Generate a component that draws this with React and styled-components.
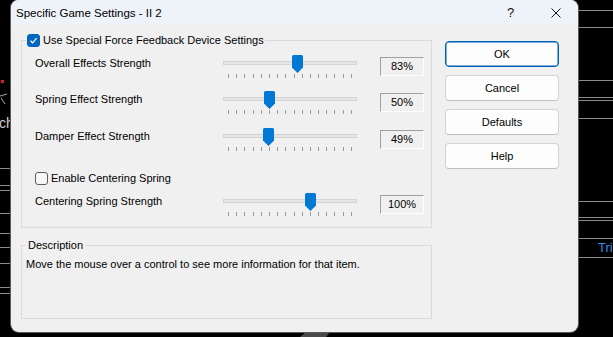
import React from "react";
import styled, { createGlobalStyle } from "styled-components";

const Global = createGlobalStyle`
	html, body {
		margin: 0;
		padding: 0;
		background: #000;
		overflow: hidden;
	}
`;

const FONT = `"Liberation Sans", Arial, sans-serif`;

const Desktop = styled.div`
	position: relative;
	width: 613px;
	height: 337px;
	background: #000;
	overflow: hidden;
	font-family: ${FONT};
`;

// the app behind the dialog
const Backdrop = styled.svg`
	position: absolute;
	left: 0;
	top: 0;
`;

const Window = styled.div`
	position: absolute;
	left: 11px;
	top: 0;
	width: 567px;
	height: 332px;
	border-radius: 8px;
	background: #f0f0f0;
	box-shadow: 0 0 0 1px #5a5a5a;
	display: flex;
	flex-direction: column;
	overflow: hidden;
`;

const TitleBar = styled.div`
	height: 25px;
	flex: none;
	background: #eef3f9;
	display: flex;
	align-items: center;
	padding-left: 5px;
`;

const Title = styled.span`
	flex: 1;
	font-size: 11.5px;
	color: #000;
`;

const CapBtn = styled.div`
	width: 45px;
	height: 25px;
	display: flex;
	align-items: center;
	justify-content: center;
	font-size: 13px;
	color: #111;
`;

const Body = styled.div`
	display: flex;
	gap: 13px;
	padding: 8px 0 0 10px;
`;

const Main = styled.div`
	width: 411px;
	display: flex;
	flex-direction: column;
`;

const Group = styled.fieldset`
	margin: ${p => p.$mt || 0}px 0 0 0;
	padding: 0;
	border: 1px solid #dadada;
	min-width: 0;
	box-sizing: border-box;
	height: ${p => (p.$h ? p.$h + "px" : "auto")};
`;

const GroupInner = styled.div`
	padding: ${p => p.$pad};
`;

const Legend = styled.legend`
	margin-left: 4px;
	padding: ${p => p.$pad || "0 1px"};
	display: flex;
	align-items: center;
	gap: 3px;
	height: 14px;
	font-size: 11px;
	line-height: 14px;
	color: #000;
`;

const Box = styled.span`
	width: 13px;
	height: 13px;
	box-sizing: border-box;
	border-radius: 3px;
	flex: none;
	display: flex;
	align-items: center;
	justify-content: center;
	background: ${p => (p.$on ? "#0067c0" : "#f7f7f7")};
	border: 1px solid ${p => (p.$on ? "#0067c0" : "#5d5d5d")};
`;

const Row = styled.div`
	display: grid;
	grid-template-columns: 165px 134px 44px;
	column-gap: 23px;
	align-items: start;
	margin-top: ${p => p.$mt}px;
`;

const Label = styled.div`
	font-size: 11px;
	line-height: 16px;
	color: #000;
	white-space: nowrap;
`;

const Slider = styled.div`
	position: relative;
	height: 24px;
`;

const Track = styled.div`
	margin-top: 6px;
	height: 4px;
	box-sizing: border-box;
	background: #e6e6e6;
	border: 1px solid #d4d4d4;
`;

const Ticks = styled.div`
	margin-top: 9px;
	padding: 0 5px;
	display: flex;
	justify-content: space-between;
`;

const Tick = styled.span`
	width: 1px;
	height: 4px;
	background: #9a9a9a;
`;

const Thumb = styled.svg`
	position: absolute;
	top: 0;
`;

const Value = styled.div`
	margin-top: 2px;
	height: 19px;
	box-sizing: border-box;
	border-top: 1px solid #a0a0a0;
	border-left: 1px solid #a0a0a0;
	border-right: 1px solid #fff;
	border-bottom: 1px solid #fff;
	font-size: 11px;
	line-height: 17px;
	text-align: center;
	color: #000;
`;

const CheckRow = styled.div`
	display: flex;
	align-items: center;
	gap: 3px;
	height: 14px;
	margin-top: ${p => p.$mt}px;
	font-size: 11px;
	color: #000;
`;

const DescText = styled.div`
	font-size: 11px;
	line-height: 14px;
	color: #000;
`;

const Side = styled.div`
	width: 114px;
	margin-top: 8px;
	display: flex;
	flex-direction: column;
	gap: 8px;
`;

const Button = styled.div`
	height: 26px;
	box-sizing: border-box;
	border-radius: 4px;
	background: #fdfdfd;
	border: 1px solid ${p => (p.$primary ? "#005fb8" : "#d3d3d3")};
	border-bottom-color: ${p => (p.$primary ? "#005fb8" : "#bfbfbf")};
	box-shadow: ${p => (p.$primary ? "inset 0 0 0 0.5px #005fb8" : "none")};
	display: flex;
	align-items: center;
	justify-content: center;
	font-size: 11px;
	color: #000;
`;

const sliders = [
	{ label: "Overall Effects Strength", value: "83%", pos: 74, mt: 0 },
	{ label: "Spring Effect Strength", value: "50%", pos: 46.5, mt: 12 },
	{ label: "Damper Effect Strength", value: "49%", pos: 45, mt: 13 }
];

function Check({ on }) {
	return (
		<Box $on={on}>
			{on && (
				<svg width="9" height="9" viewBox="0 0 9 9">
					<path d="M1.5 4.8 L3.6 6.8 L7.6 2.2" fill="none" stroke="#fff" strokeWidth="1.2" />
				</svg>
			)}
		</Box>
	);
}

function SliderRow({ label, value, pos, mt }) {
	return (
		<Row $mt={mt}>
			<Label>{label}</Label>
			<Slider>
				<Track />
				<Ticks>
					{Array.from({ length: 16 }).map((_, i) => (
						<Tick key={i} />
					))}
				</Ticks>
				<Thumb width="11" height="18" viewBox="0 0 11 18" style={{ left: pos - 5.5 }}>
					<path d="M1.5 0 H9.5 Q11 0 11 1.5 V12.5 L5.5 18 L0 12.5 V1.5 Q0 0 1.5 0 Z" fill="#0078d4" />
				</Thumb>
			</Slider>
			<Value>{value}</Value>
		</Row>
	);
}

const leftLines = [168, 185, 190, 213, 233, 247, 263, 287, 293];
const rightLines = [10, 27, 80, 97, 100, 118, 201, 217, 220, 238, 257];

export default function App() {
	return (
		<Desktop>
			<Global />
			<Backdrop width="613" height="337">
				{leftLines.map(y => (
					<line key={"l" + y} x1="0" x2="11" y1={y + 0.5} y2={y + 0.5} stroke="#8c8c8c" />
				))}
				{rightLines.map(y => (
					<line key={"r" + y} x1="578" x2="613" y1={y + 0.5} y2={y + 0.5} stroke="#8c8c8c" />
				))}
				<rect x="1" y="80" width="3" height="3" fill="#d0202a" />
				<path d="M0 96 L7 94 M1 98 L5 104" stroke="#aaa" strokeWidth="1" />
				<text x="-1" y="128" fill="#cfcfcf" fontSize="14" fontFamily="Liberation Sans, sans-serif">ch</text>
				<text x="598" y="252" fill="#2b8fe6" fontSize="13" fontFamily="Liberation Sans, sans-serif">Tri</text>
				<path d="M300 337 L306 332 L330 332 L326 337 Z" fill="#4a4a4a" />
			</Backdrop>
			<Window>
				<TitleBar>
					<Title>Specific Game Settings - II 2</Title>
					<CapBtn>?</CapBtn>
					<CapBtn>
						<svg width="10" height="10" viewBox="0 0 10 10">
							<path d="M0.5 0.5 L9.5 9.5 M9.5 0.5 L0.5 9.5" stroke="#111" strokeWidth="1" />
						</svg>
					</CapBtn>
				</TitleBar>
				<Body>
					<Main>
						<Group>
							<Legend>
								<Check on />
								<span>Use Special Force Feedback Device Settings</span>
							</Legend>
							<GroupInner $pad="8px 0 10px 13px">
								{sliders.map(s => (
									<SliderRow key={s.label} {...s} />
								))}
								<CheckRow $mt={19}>
									<Check />
									<span>Enable Centering Spring</span>
								</CheckRow>
								<SliderRow label="Centering Spring Strength" value="100%" pos={87.5} mt={8} />
							</GroupInner>
						</Group>
						<Group $mt={10} $h={81}>
							<Legend $pad="0 2px">Description</Legend>
							<GroupInner $pad="5px 4px">
								<DescText>Move the mouse over a control to see more information for that item.</DescText>
							</GroupInner>
						</Group>
					</Main>
					<Side>
						<Button $primary>OK</Button>
						<Button>Cancel</Button>
						<Button>Defaults</Button>
						<Button>Help</Button>
					</Side>
				</Body>
			</Window>
		</Desktop>
	);
}
